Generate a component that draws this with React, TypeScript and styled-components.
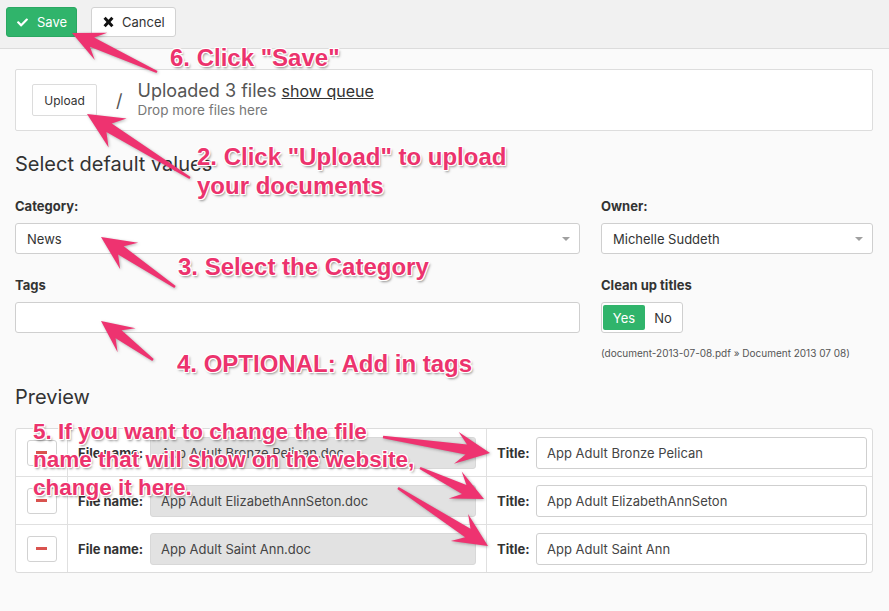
import React from "react";
import styled, { createGlobalStyle } from "styled-components";
import { FaCheck } from "react-icons/fa";

const GlobalStyle = createGlobalStyle`
  html, body { margin: 0; padding: 0; background: #fafafa; }
  body {
    font-family: Inter, "Noto Sans", "Liberation Sans", sans-serif;
    color: #333;
    -webkit-font-smoothing: antialiased;
  }
  * { box-sizing: border-box; }
`;

const Page = styled.div`
  position: relative;
  width: 889px;
  min-height: 611px;
  background: #fafafa;
  overflow: hidden;
`;

const Toolbar = styled.div`
  height: 49px;
  background: #f1f1f1;
  border-bottom: 1px solid #dcdcdc;
  display: flex;
  align-items: flex-start;
  gap: 14px;
  padding: 7px 6px 0;
`;

const ToolButton = styled.button<{ $primary?: boolean; $w: number }>`
  width: ${(p) => p.$w}px;
  height: 30px;
  display: inline-flex;
  align-items: center;
  gap: ${(p) => (p.$primary ? 9 : 8)}px;
  padding: 0 0 0 ${(p) => (p.$primary ? 10 : 11)}px;
  font-family: Inter, "Noto Sans", sans-serif;
  font-size: 13px;
  border-radius: 3px;
  border: 1px solid ${(p) => (p.$primary ? "#2aa862" : "#d2d2d2")};
  background: ${(p) => (p.$primary ? "#30b46b" : "#fff")};
  color: ${(p) => (p.$primary ? "#fff" : "#333")};
  svg { font-size: 11px; color: #fff; }
`;

const Content = styled.div`
  padding: 20px 16px 0 15px;
`;

const UploadBox = styled.div`
  height: 62px;
  background: #fff;
  border: 1px solid #dddddd;
  border-radius: 2px;
  display: flex;
  align-items: center;
  padding: 0 16px;
`;

const UploadButton = styled.button`
  width: 65px;
  height: 32px;
  background: #fff;
  border: 1px solid #dcdcdc;
  border-radius: 2px;
  font-family: Inter, "Noto Sans", sans-serif;
  font-size: 12px;
  color: #333;
  padding: 0;
`;

const Slash = styled.span`
  font-size: 18px;
  color: #555;
  margin: 0 15px 0 19px;
`;

const UploadText = styled.div`
  display: flex;
  flex-direction: column;
  margin-top: -1px;
`;

const UploadedLine = styled.div`
  font-size: 18px;
  line-height: 20px;
  color: #555;
`;

const ShowQueue = styled.span`
  font-size: 16px;
  color: #333;
  text-decoration: underline;
`;

const DropLine = styled.div`
  font-size: 13.5px;
  line-height: 17px;
  margin-top: 1px;
  color: #777;
`;

const Heading = styled.h3<{ $top: number }>`
  margin: ${(p) => p.$top}px 0 0;
  font-size: 20px;
  font-weight: 400;
  line-height: 24px;
  color: #333;
`;

const FormGrid = styled.div`
  display: grid;
  grid-template-columns: 565px 272px;
  column-gap: 21px;
  row-gap: 23px;
  margin-top: 22px;
  align-items: start;
`;

const Field = styled.div`
  display: flex;
  flex-direction: column;
  align-items: flex-start;
`;

const Label = styled.label`
  font-size: 13px;
  font-weight: 700;
  line-height: 17px;
  color: #333;
  margin-bottom: 8px;
`;

const Select = styled.div`
  position: relative;
  width: 100%;
  height: 31px;
  border: 1px solid #cfcfcf;
  border-radius: 3px;
  background: #fff;
  display: flex;
  align-items: center;
  padding: 0 11px;
  font-size: 13px;
  color: #333;
  &::after {
    content: "";
    position: absolute;
    right: 9px;
    top: 13px;
    border-left: 4px solid transparent;
    border-right: 4px solid transparent;
    border-top: 4px solid #a0a0a0;
  }
`;

const TextInput = styled.div<{ $readonly?: boolean; $h?: number }>`
  width: 100%;
  flex: 1 1 auto;
  min-width: 0;
  height: ${(p) => p.$h ?? 32}px;
  border: 1px solid ${(p) => (p.$readonly ? "#d8d8d8" : "#cfcfcf")};
  border-radius: 3px;
  background: ${(p) => (p.$readonly ? "#e2e2e2" : "#fff")};
  display: flex;
  align-items: center;
  padding: 0 10px;
  font-size: 13px;
  color: #444;
  white-space: nowrap;
  overflow: hidden;
`;

const Toggle = styled.div`
  display: inline-flex;
  width: 82px;
  height: 31px;
  border: 1px solid #cfcfcf;
  border-radius: 3px;
  background: #fff;
  padding: 2px 1px;
`;

const ToggleOption = styled.span<{ $active?: boolean }>`
  width: ${(p) => (p.$active ? 42 : 36)}px;
  height: 100%;
  display: flex;
  align-items: center;
  justify-content: center;
  border-radius: 2px;
  font-size: 13px;
  background: ${(p) => (p.$active ? "#30b46b" : "transparent")};
  color: ${(p) => (p.$active ? "#fff" : "#333")};
`;

const Hint = styled.div`
  margin-top: 13px;
  font-size: 10px;
  line-height: 14px;
  color: #555;
  white-space: nowrap;
`;

const Table = styled.div`
  margin-top: 19px;
  border: 1px solid #dcdcdc;
  border-radius: 3px;
  background: #fff;
`;

const Row = styled.div`
  display: grid;
  grid-template-columns: 52px 419px 1fr;
  height: 48px;
  border-bottom: 1px solid #e0e0e0;
  &:last-child { border-bottom: none; height: 47px; }
`;

const Cell = styled.div<{ $pl: number; $pr: number; $divider?: boolean }>`
  display: flex;
  align-items: center;
  justify-content: ${(p) => (p.$pl === 0 ? "center" : "flex-start")};
  padding: 0 ${(p) => p.$pr}px 0 ${(p) => p.$pl}px;
  border-right: ${(p) => (p.$divider ? "1px solid #e0e0e0" : "none")};
`;

const RemoveButton = styled.button`
  width: 30px;
  height: 26px;
  border: 1px solid #d2d2d2;
  border-radius: 3px;
  background: #fff;
  display: flex;
  align-items: center;
  justify-content: center;
  padding: 0;
  &::before {
    content: "";
    width: 11px;
    height: 3px;
    background: #d9534f;
  }
`;

const RowLabel = styled.span<{ $w: number }>`
  flex: 0 0 ${(p) => p.$w}px;
  font-size: 13px;
  font-weight: 700;
  color: #333;
  white-space: nowrap;
`;

const CrossIcon = () => (
  <svg width="11" height="12" viewBox="0 0 11 12" aria-hidden="true">
    <path d="M1.6 1.8 L9.4 10.2 M9.4 1.8 L1.6 10.2" stroke="#111" strokeWidth="3" strokeLinecap="butt" fill="none" />
  </svg>
);

/* ---------- annotation overlay ---------- */

const Overlay = styled.svg`
  position: absolute;
  left: 0;
  top: 0;
  width: 889px;
  height: 611px;
  pointer-events: none;
  filter: drop-shadow(1px 1.5px 1.5px rgba(0, 0, 0, 0.3));
`;

const Note = styled.div<{ $x: number; $y: number; $size?: number; $lh?: number }>`
  position: absolute;
  left: ${(p) => p.$x}px;
  top: ${(p) => p.$y}px;
  font-family: "Liberation Sans", Arial, sans-serif;
  font-weight: 700;
  font-size: ${(p) => p.$size ?? 24}px;
  line-height: ${(p) => p.$lh ?? 27}px;
  color: #ec336d;
  white-space: nowrap;
  pointer-events: none;
  text-shadow:
    -1px -1px 0 #fff, 1px -1px 0 #fff, -1px 1px 0 #fff, 1px 1px 0 #fff,
    0 -1px 0 #fff, 0 1px 0 #fff, -1px 0 0 #fff, 1px 0 0 #fff,
    1.5px 2px 2.5px rgba(0, 0, 0, 0.45);
`;

type Pt = [number, number];

function arrowPoints(t: Pt, p: Pt, L = 28, W = 15, sweep = 5, w1 = 1.2, w2 = 5): string {
  const dx = p[0] - t[0];
  const dy = p[1] - t[1];
  const len = Math.hypot(dx, dy);
  const d: Pt = [dx / len, dy / len];
  const n: Pt = [-d[1], d[0]];
  const at = (base: number, side: number): Pt => [
    p[0] - d[0] * base + n[0] * side,
    p[1] - d[1] * base + n[1] * side,
  ];
  const pts: Pt[] = [
    [t[0] + n[0] * w1, t[1] + n[1] * w1],
    at(L - sweep, w2),
    at(L + sweep, W),
    p,
    at(L + sweep, -W),
    at(L - sweep, -w2),
    [t[0] - n[0] * w1, t[1] - n[1] * w1],
  ];
  return pts.map((q) => `${q[0].toFixed(1)},${q[1].toFixed(1)}`).join(" ");
}

const arrows: { t: Pt; p: Pt; L?: number; W?: number }[] = [
  { t: [157, 72], p: [72, 33], L: 27, W: 15 },
  { t: [190, 178], p: [87, 114], L: 31, W: 17 },
  { t: [175, 287], p: [101, 237], L: 29, W: 16 },
  { t: [153, 360], p: [101, 321], L: 27, W: 15 },
  { t: [383, 437], p: [490, 453], L: 29, W: 16 },
  { t: [420, 468], p: [484, 499], L: 27, W: 15 },
  { t: [398, 488], p: [488, 546], L: 29, W: 16 },
];

const files = [
  { file: "App Adult Bronze Pelican.doc", title: "App Adult Bronze Pelican" },
  { file: "App Adult ElizabethAnnSeton.doc", title: "App Adult ElizabethAnnSeton" },
  { file: "App Adult Saint Ann.doc", title: "App Adult Saint Ann" },
];

export default function App() {
  return (
    <Page>
      <GlobalStyle />
      <Toolbar>
        <ToolButton $primary $w={71}>
          <FaCheck />
          Save
        </ToolButton>
        <ToolButton $w={85}>
          <CrossIcon />
          Cancel
        </ToolButton>
      </Toolbar>

      <Content>
        <UploadBox>
          <UploadButton>Upload</UploadButton>
          <Slash>/</Slash>
          <UploadText>
            <UploadedLine>
              Uploaded 3 files <ShowQueue>show queue</ShowQueue>
            </UploadedLine>
            <DropLine>Drop more files here</DropLine>
          </UploadText>
        </UploadBox>

        <Heading $top={21}>Select default values</Heading>

        <FormGrid>
          <Field>
            <Label>Category:</Label>
            <Select>News</Select>
          </Field>
          <Field>
            <Label>Owner:</Label>
            <Select>Michelle Suddeth</Select>
          </Field>
          <Field>
            <Label>Tags</Label>
            <TextInput $h={31} />
          </Field>
          <Field>
            <Label>Clean up titles</Label>
            <Toggle>
              <ToggleOption $active>Yes</ToggleOption>
              <ToggleOption>No</ToggleOption>
            </Toggle>
            <Hint>(document-2013-07-08.pdf » Document 2013 07 08)</Hint>
          </Field>
        </FormGrid>

        <Heading $top={25}>Preview</Heading>

        <Table>
          {files.map((f) => (
            <Row key={f.file}>
              <Cell $pl={0} $pr={0} $divider>
                <RemoveButton aria-label="Remove" />
              </Cell>
              <Cell $pl={10} $pr={10} $divider>
                <RowLabel $w={72}>File name:</RowLabel>
                <TextInput $readonly>{f.file}</TextInput>
              </Cell>
              <Cell $pl={10} $pr={5}>
                <RowLabel $w={39}>Title:</RowLabel>
                <TextInput>{f.title}</TextInput>
              </Cell>
            </Row>
          ))}
        </Table>
      </Content>

      <Overlay viewBox="0 0 889 611">
        {arrows.map((a, i) => (
          <polygon key={i} points={arrowPoints(a.t, a.p, a.L, a.W)} fill="#ee3370" />
        ))}
      </Overlay>

      <Note $x={170} $y={44}>6. Click "Save"</Note>
      <Note $x={197} $y={142} $lh={29}>
        2. Click "Upload" to upload
        <br />
        your documents
      </Note>
      <Note $x={178} $y={253}>3. Select the Category</Note>
      <Note $x={177} $y={350}>4. OPTIONAL: Add in tags</Note>
      <Note $x={33} $y={418} $size={22.5} $lh={28}>
        5. If you want to change the file
        <br />
        name that will show on the website,
        <br />
        change it here.
      </Note>
    </Page>
  );
}
